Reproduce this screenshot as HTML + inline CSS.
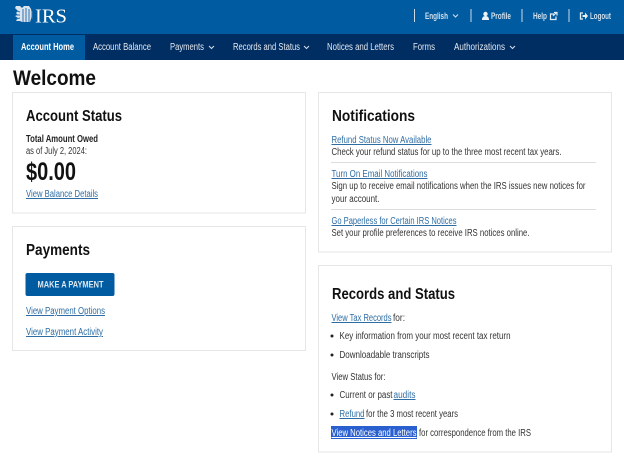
<!DOCTYPE html>
<html><head><meta charset="utf-8"><title>IRS Account Home</title>
<style>
html,body{margin:0;padding:0;background:#fff;width:624px;height:460px;overflow:hidden}
svg{display:block;font-family:"Liberation Sans",sans-serif;filter:blur(.3px)}
.n{fill:#e4e9f0;font-size:10px}
.t{fill:#d3e0ec;font-size:9px;font-weight:bold}
.h{fill:#111;font-size:16px;font-weight:bold}
.b{fill:#333;font-size:10px}
.a{fill:#2e6da4;font-size:10px;text-decoration:underline}
.c{fill:none;stroke:#d8e0ea;stroke-width:1}
.card{fill:#fff;stroke:#e6e6e6;stroke-width:1}
</style></head><body>
<svg width="624" height="460" viewBox="0 0 624 460" xmlns="http://www.w3.org/2000/svg">
<rect width="624" height="35" fill="#005ba1"/>
<rect y="34" width="624" height="26" fill="#002d62"/>
<rect x="13" y="35" width="72" height="25" fill="#005ba1"/>
<!-- logo -->
<path d="M15 8l3 3-2 2 2 2-3 1 3 2-2 3h4l2 1h8l1-3 1-5-1-5-2-3h-5l-2 2-2-2h-4z" fill="#dbe5ef"/>
<path d="M17 11l3 1M16 15l4 0M16 19l4-1M23 9v13M26 8v14M29 9v13M32 11v8" stroke="#2f74ad" stroke-width="1" fill="none"/>
<text x="35" y="22.500" font-family="Liberation Serif" font-size="20" fill="#fff" textLength="32" lengthAdjust="spacingAndGlyphs">IRS</text>
<!-- utility -->
<g stroke="#c9d9e8" stroke-width="1">
<path d="M414.500 9v13M471 9v13M522 9v13M569 9v13"/>
</g>
<text class="t" x="425" y="19" textLength="23" lengthAdjust="spacingAndGlyphs">English</text>
<path d="M453 14.500l2.500 2.500 2.500-2.500" fill="none" stroke="#d8e0ea"/>
<circle cx="485.500" cy="14" r="2.200" fill="#eef3f8"/><path d="M482 20q0-4 3.500-4t3.500 4z" fill="#eef3f8"/>
<text class="t" x="491" y="19" textLength="20" lengthAdjust="spacingAndGlyphs">Profile</text>
<text class="t" x="533" y="19" textLength="14" lengthAdjust="spacingAndGlyphs">Help</text>
<path d="M554 14h-3.500v5.500h5.500v-3M553 16l3.500-3.500M554 12.500h3v3" fill="none" stroke="#e8eef5" stroke-width="1.200"/>
<path d="M583 13h-2.500v6h2.500" fill="none" stroke="#e8eef5" stroke-width="1.300"/>
<path d="M582.500 15h2.500v-2.500l3 3.500-3 3.500v-2.500h-2.500z" fill="#e8eef5"/>
<text class="t" x="590" y="19" textLength="21" lengthAdjust="spacingAndGlyphs">Logout</text>
<!-- nav -->
<text class="n" x="21" y="50" font-weight="bold" style="fill:#fff" textLength="53" lengthAdjust="spacingAndGlyphs">Account Home</text>
<text class="n" x="93" y="50" textLength="58" lengthAdjust="spacingAndGlyphs">Account Balance</text>
<text class="n" x="170" y="50" textLength="34" lengthAdjust="spacingAndGlyphs">Payments</text>
<path class="c" d="M209 46l2.500 2.500 2.500-2.500"/>
<text class="n" x="233" y="50" textLength="67" lengthAdjust="spacingAndGlyphs">Records and Status</text>
<path class="c" d="M304 46l2.500 2.500 2.500-2.500"/>
<text class="n" x="327" y="50" textLength="67" lengthAdjust="spacingAndGlyphs">Notices and Letters</text>
<text class="n" x="413" y="50" textLength="22" lengthAdjust="spacingAndGlyphs">Forms</text>
<text class="n" x="454" y="50" textLength="51" lengthAdjust="spacingAndGlyphs">Authorizations</text>
<path class="c" d="M510 46l2.500 2.500 2.500-2.500"/>
<!-- title -->
<text x="13" y="85" font-size="21" font-weight="bold" fill="#111" textLength="83" lengthAdjust="spacingAndGlyphs">Welcome</text>
<!-- cards -->
<rect class="card" x="12.500" y="92.500" width="293" height="120.500"/>
<rect class="card" x="12.500" y="226.500" width="293" height="124"/>
<rect class="card" x="318.500" y="92.500" width="293" height="159.500"/>
<rect class="card" x="318.500" y="265.500" width="293" height="186.500"/>
<!-- account status -->
<text class="h" x="26" y="121" textLength="96" lengthAdjust="spacingAndGlyphs">Account Status</text>
<text class="b" x="26" y="142" font-weight="bold" style="fill:#222" textLength="72" lengthAdjust="spacingAndGlyphs">Total Amount Owed</text>
<text class="b" x="26" y="154" textLength="61" lengthAdjust="spacingAndGlyphs">as of July 2, 2024:</text>
<text x="26" y="180" font-size="25" font-weight="bold" fill="#111" textLength="50" lengthAdjust="spacingAndGlyphs">$0.00</text>
<text class="a" x="26" y="197" textLength="72" lengthAdjust="spacingAndGlyphs">View Balance Details</text>
<!-- payments -->
<text class="h" x="26" y="255" textLength="64" lengthAdjust="spacingAndGlyphs">Payments</text>
<rect x="25.500" y="273" width="89" height="23" rx="2" fill="#005ba1"/>
<text x="37.500" y="287.500" font-size="9" font-weight="bold" fill="#dfe8f1" textLength="66" lengthAdjust="spacingAndGlyphs">MAKE A PAYMENT</text>
<text class="a" x="26" y="314" textLength="79" lengthAdjust="spacingAndGlyphs">View Payment Options</text>
<text class="a" x="26" y="335" textLength="77" lengthAdjust="spacingAndGlyphs">View Payment Activity</text>
<!-- notifications -->
<text class="h" x="332" y="121" textLength="83" lengthAdjust="spacingAndGlyphs">Notifications</text>
<text class="a" x="331.500" y="143" textLength="100" lengthAdjust="spacingAndGlyphs">Refund Status Now Available</text>
<text class="b" x="331.500" y="155" textLength="230" lengthAdjust="spacingAndGlyphs">Check your refund status for up to the three most recent tax years.</text>
<path d="M331 162.500h265M331 209.500h265" stroke="#ddd" fill="none"/>
<text class="a" x="331.500" y="177" textLength="96" lengthAdjust="spacingAndGlyphs">Turn On Email Notifications</text>
<text class="b" x="331.500" y="189" textLength="254" lengthAdjust="spacingAndGlyphs">Sign up to receive email notifications when the IRS issues new notices for</text>
<text class="b" x="331.500" y="202" textLength="48" lengthAdjust="spacingAndGlyphs">your account.</text>
<text class="a" x="331.500" y="224" textLength="125" lengthAdjust="spacingAndGlyphs">Go Paperless for Certain IRS Notices</text>
<text class="b" x="331.500" y="236" textLength="198" lengthAdjust="spacingAndGlyphs">Set your profile preferences to receive IRS notices online.</text>
<!-- records -->
<text class="h" x="332" y="299" textLength="123" lengthAdjust="spacingAndGlyphs">Records and Status</text>
<text class="a" x="331.500" y="321" textLength="60" lengthAdjust="spacingAndGlyphs">View Tax Records</text>
<text class="b" x="393" y="321" textLength="12" lengthAdjust="spacingAndGlyphs">for:</text>
<circle cx="332" cy="336" r="1.500" fill="#222"/>
<text class="b" x="339.500" y="339" textLength="171" lengthAdjust="spacingAndGlyphs">Key information from your most recent tax return</text>
<circle cx="332" cy="355" r="1.500" fill="#222"/>
<text class="b" x="339.500" y="358" textLength="90" lengthAdjust="spacingAndGlyphs">Downloadable transcripts</text>
<text class="b" x="331.500" y="380" textLength="54" lengthAdjust="spacingAndGlyphs">View Status for:</text>
<circle cx="332" cy="395" r="1.500" fill="#222"/>
<text class="b" x="339.500" y="398" textLength="53" lengthAdjust="spacingAndGlyphs">Current or past</text>
<text class="a" x="393.500" y="398" textLength="22" lengthAdjust="spacingAndGlyphs">audits</text>
<circle cx="332" cy="414" r="1.500" fill="#222"/>
<text class="a" x="339.500" y="417" textLength="25" lengthAdjust="spacingAndGlyphs">Refund</text>
<text class="b" x="366" y="417" textLength="92" lengthAdjust="spacingAndGlyphs">for the 3 most recent years</text>
<rect x="331" y="426" width="86" height="13" fill="#2a5fd0"/>
<text x="331.500" y="436" font-size="10" fill="#fff" text-decoration="underline" textLength="85" lengthAdjust="spacingAndGlyphs">View Notices and Letters</text>
<text class="b" x="419" y="436" textLength="112" lengthAdjust="spacingAndGlyphs">for correspondence from the IRS</text>
</svg>
</body></html>
